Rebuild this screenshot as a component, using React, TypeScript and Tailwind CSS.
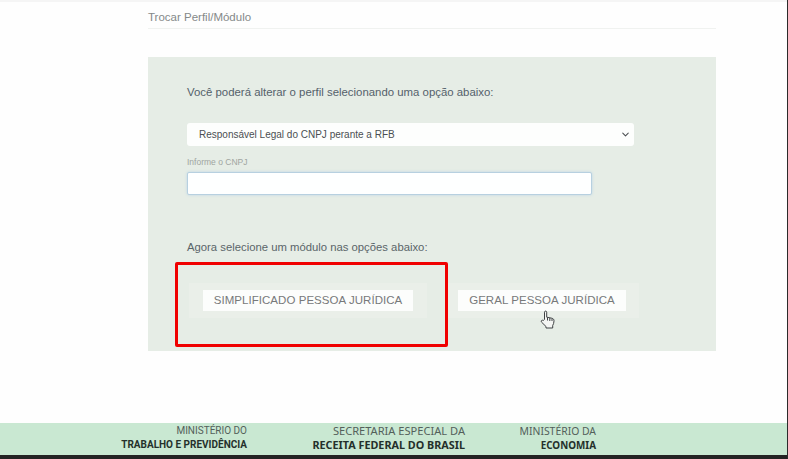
import React from "react";
import { ChevronDown } from "lucide-react";

const sans = "font-['Liberation_Sans',Arial,sans-serif]";
const footerFont = "font-['Noto_Sans',sans-serif]";

const ModuleButton = ({ label, className }: { label: string; className: string }) => (
  <div className={`flex items-center justify-center bg-[#eaefe9] ${className}`}>
    <button className="flex h-[21px] items-center justify-center bg-[#fcfdfc] px-[11px] text-[11.5px] tracking-[0.05px] whitespace-nowrap text-[#77797a]">
      {label}
    </button>
  </div>
);

const HandCursor = () => (
  <svg
    className="absolute left-[540px] top-[310px]"
    width="16"
    height="19"
    viewBox="0 0 16 19"
    fill="#f4f5f3"
    stroke="#3f4244"
    strokeWidth="1"
    strokeLinejoin="round"
  >
    <path d="M4.5 9.5V2.2c0-1.5 2.2-1.5 2.2 0v5l5 1c1.6.4 2.3 1.100 2.300 2.600 0 2-.6 3.400-1.300 4.700V18H6v-1.500L1.600 12.200c-1-1.200.4-2.700 1.700-1.700z" />
    <path d="M7.500 7.500v3M9.800 8v3M12 8.500v2.500" fill="none" />
  </svg>
);

const FooterBlock = ({
  light,
  bold,
  lightSize,
  boldSize,
  className,
}: {
  light: string;
  bold: string;
  lightSize: string;
  boldSize: string;
  className: string;
}) => (
  <div className={`flex flex-col items-end pt-[1px] leading-[14px] whitespace-nowrap ${className}`}>
    <span className={`text-[#53605a] ${lightSize}`}>{light}</span>
    <span className={`font-bold text-[#24302b] ${boldSize}`}>{bold}</span>
  </div>
);

export default function App() {
  return (
    <div className={`relative flex h-[459px] w-[788px] flex-col overflow-hidden bg-[#fefefe] ${sans}`}>
      <div className="h-[2px] bg-[#f5f5f5]" />
      <main className="flex flex-1 flex-col pl-[148px] pr-[72px]">
        <h2 className="flex h-[27px] items-end border-b border-[#f0f2f0] pb-[2px] text-[11.5px] text-[#858989]">
          Trocar Perfil/Módulo
        </h2>

        <section className="mt-[28px] flex h-[294px] flex-col bg-[#e6ede6] pl-[39px] pt-[28px]">
          <p className="text-[11.4px] leading-[15px] text-[#54616b]">
            Você poderá alterar o perfil selecionando uma opção abaixo:
          </p>

          <div className="mt-[23px] flex h-[23px] w-[447px] items-center justify-between rounded-[3px] bg-[#fdfefd] pl-[12px] pr-[3px]">
            <span className="text-[10px] text-[#4b4f52]">
              Responsável Legal do CNPJ perante a RFB
            </span>
            <ChevronDown size={11} strokeWidth={2.2} className="text-[#4a4d50]" />
          </div>

          <label className="mt-[12px] text-[8.5px] leading-[9px] text-[#a0a5a1]">Informe o CNPJ</label>
          <input
            type="text"
            className="mt-[5px] h-[23px] w-[405px] rounded-[2px] border border-[#b7d0e0] bg-[#feffff] shadow-[0_0_3px_#bcd5e5] outline-none"
          />

          <p className="mt-[45px] text-[11.3px] leading-[14px] text-[#5a6569]">
            Agora selecione um módulo nas opções abaixo:
          </p>

          <div className="ml-[2px] mt-[29px] flex gap-[18px]">
            <ModuleButton label="SIMPLIFICADO PESSOA JURÍDICA" className="h-[35px] w-[238px]" />
            <ModuleButton label="GERAL PESSOA JURÍDICA" className="h-[35px] w-[194px]" />
          </div>
        </section>
      </main>

      <footer className={`flex h-[32px] bg-[#c9e8d2] ${footerFont}`}>
        <FooterBlock
          light="MINISTÉRIO DO"
          bold="TRABALHO E PREVIDÊNCIA"
          lightSize="text-[10px]"
          boldSize="text-[10px]"
          className="ml-[120px] w-[127px] font-['Roboto',sans-serif]"
        />
        <FooterBlock
          light="SECRETARIA ESPECIAL DA"
          bold="RECEITA FEDERAL DO BRASIL"
          lightSize="text-[11.1px]"
          boldSize="text-[10.8px]"
          className="ml-[58px] w-[160px]"
        />
        <FooterBlock
          light="MINISTÉRIO DA"
          bold="ECONOMIA"
          lightSize="text-[10.4px]"
          boldSize="text-[9.9px]"
          className="ml-[55px] w-[76px]"
        />
      </footer>
      <div className="h-[4px] bg-[#232323]" />

      <div className="absolute left-[175px] top-[262px] h-[85px] w-[273px] rounded-[2px] border-[3px] border-[#f00000]" />
      <HandCursor />
      <div className="absolute right-0 top-0 h-full w-[1px] bg-[#2b2b2b]" />
    </div>
  );
}
